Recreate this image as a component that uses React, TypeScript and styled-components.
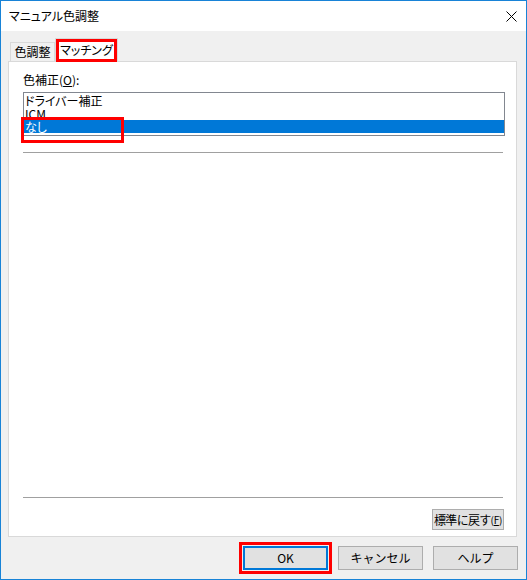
import React from "react";
import styled, { createGlobalStyle } from "styled-components";

const Global = createGlobalStyle`
  html, body { margin: 0; padding: 0; background: #ffffff; }
  body {
    font-family: "Noto Sans CJK JP", "Noto Sans", sans-serif;
    font-size: 12px;
    font-feature-settings: "palt";
    color: #000000;
  }
  * { box-sizing: border-box; }
`;

const Window = styled.div`
  width: 527px;
  height: 580px;
  border: 1px solid #1883d7;
  display: flex;
  flex-direction: column;
  background: #f0f0f0;
`;

const TitleBar = styled.div`
  height: 30px;
  flex-shrink: 0;
  background: #ffffff;
  display: flex;
  align-items: center;
  justify-content: space-between;
  padding: 0 9px 0 8px;
`;

const Title = styled.span`
  font-size: 12px;
  line-height: 14px;
`;

const CloseIcon = styled.svg`
  width: 11px;
  height: 11px;
  display: block;
`;

const Body = styled.div`
  flex: 1;
  display: flex;
  flex-direction: column;
`;

const TabStrip = styled.div`
  height: 30px;
  flex-shrink: 0;
  display: flex;
  align-items: flex-end;
  padding-left: 9px;
`;

const Tab = styled.div<{ $active?: boolean }>`
  position: relative;
  z-index: 1;
  display: flex;
  align-items: center;
  justify-content: center;
  white-space: nowrap;
  font-size: 12px;
  line-height: 14px;
  border: 1px solid #d9d9d9;
  border-bottom: none;
  width: ${(p) => (p.$active ? "63px" : "45px")};
  height: ${(p) => (p.$active ? "24px" : "19px")};
  margin-bottom: ${(p) => (p.$active ? "-1px" : "0")};
  padding-bottom: ${(p) => (p.$active ? "2px" : "0")};
  background: ${(p) => (p.$active ? "#ffffff" : "#f0f0f0")};
  box-shadow: ${(p) => (p.$active ? "inset 0 0 0 3px #ff0000" : "none")};
`;

const Panel = styled.div`
  height: 476px;
  flex-shrink: 0;
  margin: 0 9px 0 7px;
  background: #ffffff;
  border: 1px solid #d9d9d9;
  display: flex;
  flex-direction: column;
  padding: 0 11px 0 14px;
`;

const FieldLabel = styled.div`
  margin-top: 11px;
  line-height: 14px;
  font-size: 12px;
`;

const Mnemonic = styled.span`
  text-decoration: underline;
`;

const ListBox = styled.div`
  margin-top: 5px;
  height: 44px;
  border: 1px solid #828790;
  background: #ffffff;
  padding: 1px 0 2px;
  display: flex;
  flex-direction: column;
`;

const ListRow = styled.div<{ $selected?: boolean; $marked?: boolean }>`
  position: relative;
  height: 13px;
  line-height: 13px;
  font-size: 12px;
  white-space: nowrap;
  padding-left: 1px;
  background: ${(p) => (p.$selected ? "#0078d7" : "transparent")};
  color: ${(p) => (p.$selected ? "#ffffff" : "#000000")};

  &::after {
    content: "";
    display: ${(p) => (p.$marked ? "block" : "none")};
    position: absolute;
    left: -3px;
    top: -3px;
    width: 97px;
    height: 20px;
    border: 3px solid #ff0000;
  }
`;

const Separator = styled.div<{ $pushDown?: boolean }>`
  height: 1px;
  flex-shrink: 0;
  background: #a0a0a0;
  margin-right: 2px;
  margin-top: ${(p) => (p.$pushDown ? "auto" : "16px")};
`;

const SmallButton = styled.button`
  align-self: flex-end;
  margin: 11px 1px 6px 0;
  width: 72px;
  height: 21px;
  padding: 0;
  border: 1px solid #adadad;
  background: #e1e1e1;
  font-family: inherit;
  font-size: 12px;
  line-height: 14px;
  letter-spacing: -0.7px;
  white-space: nowrap;
  color: #000000;
  display: flex;
  align-items: center;
  justify-content: center;
`;

const Accel = styled.span`
  font-size: 10px;
  letter-spacing: -0.3px;
`;

const ButtonRow = styled.div`
  display: flex;
  justify-content: flex-end;
  gap: 10px;
  padding: 9px 8px 9px 0;
`;

const DialogButton = styled.button<{ $default?: boolean }>`
  width: 85px;
  height: 24px;
  padding: 0;
  background: #e1e1e1;
  border: ${(p) => (p.$default ? "2px solid #0078d7" : "1px solid #adadad")};
  outline: ${(p) => (p.$default ? "3px solid #ff0000" : "none")};
  outline-offset: 1px;
  font-family: inherit;
  font-size: 12px;
  line-height: 14px;
  color: #000000;
`;

export default function App() {
  return (
    <>
      <Global />
      <Window>
        <TitleBar>
          <Title>マニュアル色調整</Title>
          <CloseIcon viewBox="0 0 11 11">
            <path d="M0.5 0.5 L10.5 10.5 M10.5 0.5 L0.5 10.5" stroke="#000" strokeWidth="1" fill="none" />
          </CloseIcon>
        </TitleBar>
        <Body>
          <TabStrip>
            <Tab>色調整</Tab>
            <Tab $active>マッチング</Tab>
          </TabStrip>
          <Panel>
            <FieldLabel>
              色補正(<Mnemonic>O</Mnemonic>):
            </FieldLabel>
            <ListBox>
              <ListRow>ドライバー補正</ListRow>
              <ListRow>ICM</ListRow>
              <ListRow $selected $marked>なし</ListRow>
            </ListBox>
            <Separator />
            <Separator $pushDown />
            <SmallButton>
              標準に戻す<Accel>(<Mnemonic>F</Mnemonic>)</Accel>
            </SmallButton>
          </Panel>
          <ButtonRow>
            <DialogButton $default>OK</DialogButton>
            <DialogButton>キャンセル</DialogButton>
            <DialogButton>ヘルプ</DialogButton>
          </ButtonRow>
        </Body>
      </Window>
    </>
  );
}
